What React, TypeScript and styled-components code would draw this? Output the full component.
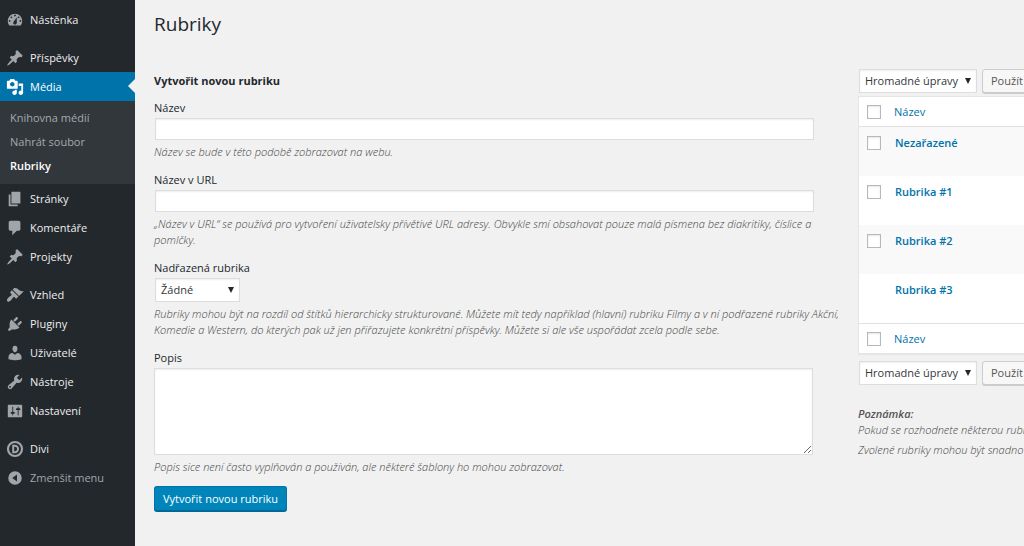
import React from "react";
import styled, { createGlobalStyle, css } from "styled-components";

const GlobalStyle = createGlobalStyle`
  *, *::before, *::after { box-sizing: border-box; }
  html, body { margin: 0; background: #f1f1f1; }
  body {
    font-family: "Open Sans", "Noto Sans", sans-serif;
    font-size: 11px;
    line-height: 16px;
    color: #444;
    overflow: hidden;
  }
  button, input, select, textarea { font-family: inherit; margin: 0; }
`;

const Page = styled.div`
  display: flex;
  min-height: 100vh;
`;

const Sidebar = styled.nav`
  flex: none;
  width: 135px;
  padding-top: 5px;
  background: #23282d;
`;

const MenuList = styled.ul`
  list-style: none;
  margin: 0 0 9px;
  padding: 0;
`;

const menuRow = css`
  display: flex;
  align-items: center;
  gap: 6px;
  width: 100%;
  height: 29px;
  padding: 0 0 0 6px;
  font-size: 11px;
  text-align: left;
`;

const MenuLink = styled.a<{ $active?: boolean }>`
  ${menuRow}
  position: relative;
  color: ${(p) => (p.$active ? "#fff" : "#eee")};
  background: ${(p) => (p.$active ? "#0073aa" : "transparent")};
  text-decoration: none;

  svg { color: ${(p) => (p.$active ? "#fff" : "#a0a5aa")}; }

  ${(p) =>
    p.$active &&
    css`
      &::after {
        content: "";
        position: absolute;
        right: 0;
        top: 7px;
        border: 7px solid transparent;
        border-left-width: 0;
        border-right-color: #f1f1f1;
      }
    `}
`;

const CollapseButton = styled.button`
  ${menuRow}
  border: 0;
  background: transparent;
  color: #a0a5aa;
`;

const MenuIcon = styled.svg`
  flex: none;
  width: 18px;
  height: 18px;
  fill: currentColor;
`;

const Submenu = styled.ul`
  list-style: none;
  margin: 0;
  padding: 5px 0 6px;
  background: #32373c;
`;

const SubmenuLink = styled.a<{ $current?: boolean }>`
  display: block;
  padding: 4px 10px;
  font-size: 11px;
  color: ${(p) => (p.$current ? "#fff" : "#a4a9ad")};
  font-weight: ${(p) => (p.$current ? 600 : 400)};
  text-decoration: none;
`;

const Content = styled.main`
  flex: 1;
  min-width: 0;
  padding: 11px 0 0 19px;
`;

const PageTitle = styled.h1`
  margin: 0 0 31px;
  font-size: 19px;
  line-height: 26px;
  font-weight: 400;
  color: #23282d;
`;

const Columns = styled.div`
  display: grid;
  grid-template-columns: minmax(0, 1fr) 166px;
  column-gap: 10px;
  align-items: start;
`;

const Form = styled.form`
  padding-top: 5px;
`;

const FormTitle = styled.h2`
  margin: 0 0 11px;
  font-size: 11px;
  line-height: 16px;
  font-weight: 700;
  color: #23282d;
`;

const Field = styled.div`
  margin-bottom: 12px;
`;

const Label = styled.label`
  display: block;
  margin-bottom: 2px;
  color: #23282d;
`;

const control = css`
  display: block;
  border: 1px solid #ddd;
  border-radius: 0;
  background: #fff;
  box-shadow: inset 0 1px 2px rgba(0, 0, 0, 0.07);
  color: #32373c;
  outline: 0;
`;

const TextInput = styled.input`
  ${control}
  width: 95%;
  height: 22px;
  margin: 0 1px;
  padding: 2px 4px;
  font-size: 11px;
`;

const TextArea = styled.textarea`
  ${control}
  width: 95%;
  height: 87px;
  padding: 2px 5px;
  font-size: 11px;
  resize: vertical;
`;

const noteText = css`
  font-weight: 300;
  font-style: italic;
  color: #444;
`;

const Help = styled.p`
  ${noteText}
  margin: 4px 0 0;
`;

const SelectBox = styled.span<{ $width: number }>`
  display: inline-grid;
  flex: none;
  grid-template-columns: minmax(0, 1fr) 12px;
  align-items: center;
  width: ${(p) => p.$width}px;
  margin: 0 1px;
  vertical-align: top;

  svg {
    grid-area: 1 / 2;
    width: 6px;
    height: 6px;
    z-index: 1;
    fill: #23282d;
    pointer-events: none;
  }
`;

const Select = styled.select`
  ${control}
  grid-area: 1 / 1 / 2 / 3;
  width: 100%;
  height: 24px;
  padding: 0 14px 0 5px;
  font-size: 11px;
  line-height: 20px;
  appearance: none;
`;

const SubmitButton = styled.button`
  height: 25px;
  margin-top: -1px;
  padding: 0 8px 1px;
  border: 1px solid #0073aa;
  border-bottom-color: #006799;
  border-radius: 3px;
  background: #0085ba;
  box-shadow: 0 1px 0 #006799;
  color: #fff;
  font-size: 11px;
`;

const ListPanel = styled.section`
  overflow: hidden;
`;

const BulkBar = styled.div`
  display: flex;
  align-items: center;
  gap: 4px;
  height: 25px;
`;

const ApplyButton = styled.button`
  flex: none;
  height: 24px;
  padding: 0 8px;
  border: 1px solid #ccc;
  border-radius: 3px;
  background: #f7f7f7;
  box-shadow: 0 1px 0 #ccc;
  color: #555;
  font-size: 11px;
`;

const Table = styled.table`
  width: 120%;
  margin: 3px 0 6px;
  border: 1px solid #e5e5e5;
  border-spacing: 0;
  background: #fff;
  box-shadow: 0 1px 1px rgba(0, 0, 0, 0.04);

  th, td { padding: 0; text-align: left; }
  thead th { height: 30px; border-bottom: 1px solid #e1e1e1; }
  tfoot th { height: 30px; border-top: 1px solid #e1e1e1; }
  tbody td { height: 49px; padding-top: 8px; vertical-align: top; }
  tbody tr:nth-child(odd) { background: #f9f9f9; }
  th:first-child, td:first-child { width: 35px; padding-left: 8px; }
  tbody td:first-child { padding-top: 9px; }
  tbody td:last-child { padding-left: 1px; }
`;

const CheckBox = styled.input`
  display: block;
  appearance: none;
  width: 14px;
  height: 14px;
  border: 1px solid #b4b9be;
  background: #fff;
  box-shadow: inset 0 1px 2px rgba(0, 0, 0, 0.1);
`;

const TableLink = styled.a<{ $strong?: boolean }>`
  display: block;
  font-size: 11px;
  font-weight: ${(p) => (p.$strong ? 600 : 400)};
  color: #0073aa;
  text-decoration: none;
`;

const Notes = styled.div`
  ${noteText}
  margin-top: 21px;
  white-space: nowrap;

  p { margin: 0 0 4px; }
  strong { font-weight: 600; color: #555; }
`;

const icons: Record<string, string> = {
  dashboard:
    "M3.76 16h12.48c1.1-1.37 1.76-3.11 1.76-5 0-4.42-3.58-8-8-8s-8 3.58-8 8c0 1.89.66 3.63 1.76 5zM10 4c.55 0 1 .45 1 1s-.45 1-1 1-1-.45-1-1 .45-1 1-1zM6 6c.55 0 1 .45 1 1s-.45 1-1 1-1-.45-1-1 .45-1 1-1zm8 0c.55 0 1 .45 1 1s-.45 1-1 1-1-.45-1-1 .45-1 1-1zm-5.37 5.55L12 7v6c0 1.1-.9 2-2 2s-2-.9-2-2c0-.57.24-1.08.63-1.45zM4 10c.55 0 1 .45 1 1s-.45 1-1 1-1-.45-1-1 .45-1 1-1zm12 0c.55 0 1 .45 1 1s-.45 1-1 1-1-.45-1-1 .45-1 1-1z",
  pin: "M10.44 3.02l1.82-1.82 6.36 6.35-1.83 1.82c-1.05-.68-2.48-.57-3.41.36l-.75.75c-.92.93-1.04 2.35-.35 3.41l-1.83 1.82-2.41-2.41-2.8 2.79c-.42.42-3.38 2.71-3.8 2.29s1.86-3.39 2.28-3.81l2.79-2.79L4.1 9.36l1.83-1.82c1.05.69 2.48.57 3.4-.36l.75-.75c.93-.92 1.05-2.35.36-3.41z",
  media:
    "M13 11V4c0-.55-.45-1-1-1h-1.67L9 1H5L3.67 3H2c-.55 0-1 .45-1 1v7c0 .55.45 1 1 1h10c.55 0 1-.45 1-1zM7 4.5c1.38 0 2.5 1.12 2.5 2.5S8.38 9.5 7 9.5 4.5 8.38 4.5 7 5.62 4.5 7 4.5zM14 6h5v10.5c0 1.38-1.12 2.5-2.5 2.5S14 17.88 14 16.5s1.12-2.5 2.5-2.5c.17 0 .34.02.5.05V9h-3V6zm-4 8.05V13h2v3.5c0 1.38-1.12 2.5-2.5 2.5S7 17.88 7 16.5 8.12 14 9.5 14c.17 0 .34.02.5.05z",
  pages: "M6 15V2h10v13H6zm-1 1h8v2H3V5h2v11z",
  comment:
    "M5 2h9c1.1 0 2 .9 2 2v7c0 1.1-.9 2-2 2h-2l-5 5v-5H5c-1.1 0-2-.9-2-2V4c0-1.1.9-2 2-2z",
  brush:
    "M14.48 11.06L7.41 3.99l1.5-1.5c.5-.56 2.3-.47 3.51.32 1.21.8 1.43 1.28 2.91 2.1 1.18.64 2.45 1.26 4.45.85zm-.71.71L6.7 4.7 4.93 6.47c-.39.39-.39 1.02 0 1.41l1.06 1.06c.39.39.39 1.03 0 1.42-.6.6-1.43 1.11-2.21 1.69-.35.26-.7.53-1.01.84C1.43 14.23.4 16.08 1.4 17.07c.99 1 2.84-.03 4.18-1.36.31-.31.58-.66.85-1.02.57-.78 1.08-1.61 1.69-2.21.39-.39 1.02-.39 1.41 0l1.06 1.06c.39.39 1.02.39 1.41 0z",
  plug: "M13.11 4.36L9.87 7.6 8 5.73l3.24-3.24c.35-.34 1.05-.2 1.56.32.52.51.66 1.21.31 1.55zm-8 1.77l.91-1.12 9.01 9.01-1.19.84c-.71.71-2.63 1.16-3.82 1.16H6.14L4.9 17.26c-.59.59-1.54.59-2.12 0-.59-.58-.59-1.53 0-2.12l1.24-1.24v-3.88c0-1.13.4-3.19 1.09-3.89zm7.26 3.97l3.24-3.24c.34-.35 1.04-.21 1.55.31.52.51.66 1.21.31 1.55l-3.24 3.25z",
  user: "M10 9.25c-2.27 0-2.73-3.44-2.73-3.44C7 4.02 7.82 2 9.97 2c2.16 0 2.98 2.02 2.71 3.81 0 0-.41 3.44-2.68 3.44zm0 2.57L12.72 10c2.39 0 4.52 2.33 4.52 4.53v2.49s-3.65 1.13-7.24 1.13c-3.65 0-7.24-1.13-7.24-1.13v-2.49c0-2.25 1.94-4.48 4.47-4.48z",
  wrench:
    "M16.68 9.77c-1.34 1.34-3.3 1.67-4.95.99l-5.41 6.52c-.99.99-2.59.99-3.58 0s-.99-2.59 0-3.57l6.52-5.42c-.68-1.65-.35-3.61.99-4.95 1.28-1.28 3.12-1.62 4.72-1.06l-2.89 2.89 2.82 2.82 2.86-2.87c.53 1.58.18 3.39-1.08 4.65zM3.81 16.21c.4.39 1.04.39 1.43 0 .4-.4.4-1.04 0-1.43-.39-.4-1.03-.4-1.43 0-.39.39-.39 1.03 0 1.43z",
  sliders:
    "M18 16V4c0-.55-.45-1-1-1H3c-.55 0-1 .45-1 1v12c0 .55.45 1 1 1h14c.55 0 1-.45 1-1zM8 11h1c.55 0 1 .45 1 1s-.45 1-1 1H8v1.5c0 .28-.22.5-.5.5s-.5-.22-.5-.5V13H6c-.55 0-1-.45-1-1s.45-1 1-1h1V5.5c0-.28.22-.5.5-.5s.5.22.5.5V11zm5-2h-1c-.55 0-1-.45-1-1s.45-1 1-1h1V5.5c0-.28.22-.5.5-.5s.5.22.5.5V7h1c.55 0 1 .45 1 1s-.45 1-1 1h-1v5.5c0 .28-.22.5-.5.5s-.5-.22-.5-.5V9z",
  collapse:
    "M10 2.5a7.5 7.5 0 1 0 0 15a7.5 7.5 0 0 0 0-15zM12.2 6v8L7 10z",
};

function Icon({ name }: { name: string }) {
  if (name === "divi") {
    return (
      <MenuIcon viewBox="0 0 20 20" aria-hidden="true">
        <circle cx="10" cy="10" r="7.8" fill="none" stroke="currentColor" strokeWidth="2.4" />
        <path d="M8 6.4h1.8a3.6 3.6 0 0 1 0 7.2H8z" fill="none" stroke="currentColor" strokeWidth="2.2" />
      </MenuIcon>
    );
  }
  return (
    <MenuIcon viewBox="0 0 20 20" aria-hidden="true">
      <path fillRule="evenodd" d={icons[name]} />
    </MenuIcon>
  );
}

type Item = { label: string; icon: string; children?: string[] };

const menuGroups: Item[][] = [
  [{ label: "Nástěnka", icon: "dashboard" }],
  [
    { label: "Příspěvky", icon: "pin" },
    { label: "Média", icon: "media", children: ["Knihovna médií", "Nahrát soubor", "Rubriky"] },
    { label: "Stránky", icon: "pages" },
    { label: "Komentáře", icon: "comment" },
    { label: "Projekty", icon: "pin" },
  ],
  [
    { label: "Vzhled", icon: "brush" },
    { label: "Pluginy", icon: "plug" },
    { label: "Uživatelé", icon: "user" },
    { label: "Nástroje", icon: "wrench" },
    { label: "Nastavení", icon: "sliders" },
  ],
];

const categories = [
  { name: "Nezařazené", selectable: true },
  { name: "Rubrika #1", selectable: true },
  { name: "Rubrika #2", selectable: true },
  { name: "Rubrika #3", selectable: false },
];

function MenuItem({ item }: { item: Item }) {
  return (
    <li>
      <MenuLink href="#" $active={!!item.children}>
        <Icon name={item.icon} />
        {item.label}
      </MenuLink>
      {item.children && (
        <Submenu>
          {item.children.map((child) => (
            <li key={child}>
              <SubmenuLink href="#" $current={child === "Rubriky"}>
                {child}
              </SubmenuLink>
            </li>
          ))}
        </Submenu>
      )}
    </li>
  );
}

function DropDown(props: { id?: string; label?: string; width: number; value: string }) {
  return (
    <SelectBox $width={props.width}>
      <Select id={props.id} aria-label={props.label}>
        <option>{props.value}</option>
      </Select>
      <svg viewBox="0 0 6 6" aria-hidden="true">
        <path d="M0 0h6L3 6z" />
      </svg>
    </SelectBox>
  );
}

function BulkActions() {
  return (
    <BulkBar>
      <DropDown width={118} value="Hromadné úpravy" label="Hromadné úpravy" />
      <ApplyButton type="button">Použít</ApplyButton>
    </BulkBar>
  );
}

function HeadingCells() {
  return (
    <tr>
      <th>
        <CheckBox type="checkbox" aria-label="Vybrat vše" />
      </th>
      <th>
        <TableLink href="#">Název</TableLink>
      </th>
    </tr>
  );
}

export default function App() {
  return (
    <Page>
      <GlobalStyle />
      <Sidebar>
        {menuGroups.map((group) => (
          <MenuList key={group[0].label}>
            {group.map((item) => (
              <MenuItem key={item.label} item={item} />
            ))}
          </MenuList>
        ))}
        <MenuList>
          <MenuItem item={{ label: "Divi", icon: "divi" }} />
          <li>
            <CollapseButton type="button">
              <Icon name="collapse" />
              Zmenšit menu
            </CollapseButton>
          </li>
        </MenuList>
      </Sidebar>
      <Content>
        <PageTitle>Rubriky</PageTitle>
        <Columns>
          <Form>
            <FormTitle>Vytvořit novou rubriku</FormTitle>
            <Field>
              <Label htmlFor="name">Název</Label>
              <TextInput id="name" type="text" />
              <Help>Název se bude v této podobě zobrazovat na webu.</Help>
            </Field>
            <Field>
              <Label htmlFor="slug">Název v URL</Label>
              <TextInput id="slug" type="text" />
              <Help>
                „Název v URL“ se používá pro vytvoření uživatelsky přívětivé URL adresy. Obvykle smí
                obsahovat pouze malá písmena bez diakritiky, číslice a pomlčky.
              </Help>
            </Field>
            <Field>
              <Label htmlFor="parent">Nadřazená rubrika</Label>
              <DropDown id="parent" width={85} value="Žádné" />
              <Help>
                Rubriky mohou být na rozdíl od štítků hierarchicky strukturované. Můžete mít tedy
                například (hlavní) rubriku Filmy a v ní podřazené rubriky Akční, Komedie a Western,
                do kterých pak už jen přiřazujete konkrétní příspěvky. Můžete si ale vše uspořádat
                zcela podle sebe.
              </Help>
            </Field>
            <Field>
              <Label htmlFor="description">Popis</Label>
              <TextArea id="description" />
              <Help>
                Popis sice není často vyplňován a používán, ale některé šablony ho mohou zobrazovat.
              </Help>
            </Field>
            <SubmitButton type="button">Vytvořit novou rubriku</SubmitButton>
          </Form>
          <ListPanel>
            <BulkActions />
            <Table>
              <thead>
                <HeadingCells />
              </thead>
              <tbody>
                {categories.map((category) => (
                  <tr key={category.name}>
                    <td>
                      {category.selectable && (
                        <CheckBox type="checkbox" aria-label={category.name} />
                      )}
                    </td>
                    <td>
                      <TableLink href="#" $strong>
                        {category.name}
                      </TableLink>
                    </td>
                  </tr>
                ))}
              </tbody>
              <tfoot>
                <HeadingCells />
              </tfoot>
            </Table>
            <BulkActions />
            <Notes>
              <p>
                <strong>Poznámka:</strong>
                <br />
                Pokud se rozhodnete některou rubr
              </p>
              <p>Zvolené rubriky mohou být snadno</p>
            </Notes>
          </ListPanel>
        </Columns>
      </Content>
    </Page>
  );
}
